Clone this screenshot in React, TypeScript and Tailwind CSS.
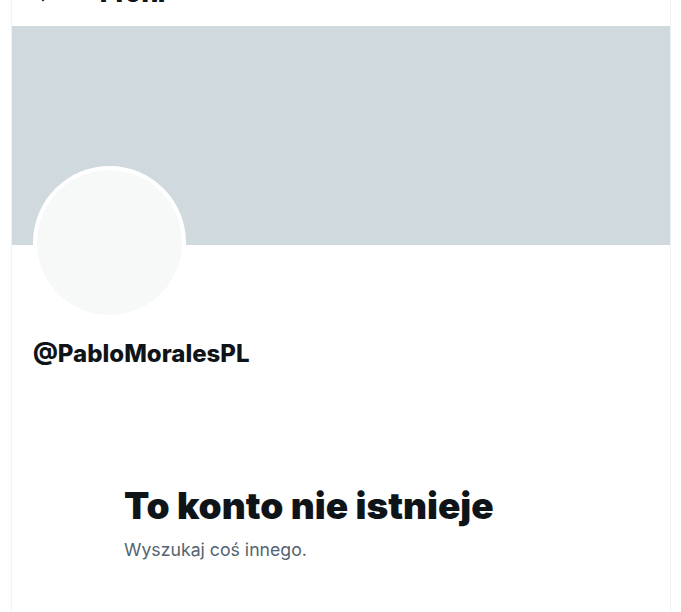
export default function App() {
  return (
    <div className="min-h-screen bg-white font-['Inter','Noto_Sans',sans-serif] text-[#0f1419] overflow-hidden">
      <div className="ml-[11px] w-[660px] border-x border-[#eff3f4] -mt-[38px] min-h-[670px]">
        {/* Header (scrolled out of view) */}
        <div className="h-[64px] flex items-center pl-[20px] bg-white">
          <svg viewBox="0 0 24 24" className="w-6 h-6 shrink-0" fill="currentColor">
            <path d="M7.414 13l5.043 5.04-1.414 1.42L3.586 12l7.457-7.46 1.414 1.42L7.414 11H21v2H7.414z" />
          </svg>
          <h2 className="ml-[44px] text-[24px] leading-7 font-black">Profil</h2>
        </div>

        {/* Banner */}
        <div className="h-[219px] bg-[#cfd9de]" />

        {/* Avatar + handle */}
        <div className="pl-[21px]">
          <div className="-mt-[79px] w-[153px] h-[153px] rounded-full bg-white p-[4px]">
            <div className="w-full h-full rounded-full bg-[#f7f9f9]" />
          </div>
          <div className="mt-[20px] text-[24px] leading-[29px] font-extrabold">@PabloMoralesPL</div>
        </div>

        {/* Empty state */}
        <div className="ml-[112px] mt-[116px]">
          <div className="text-[37px] leading-[44px] font-black">To konto nie istnieje</div>
          <div className="mt-[10px] text-[17.7px] leading-6 text-[#536471]">Wyszukaj coś innego.</div>
        </div>
      </div>
    </div>
  )
}
